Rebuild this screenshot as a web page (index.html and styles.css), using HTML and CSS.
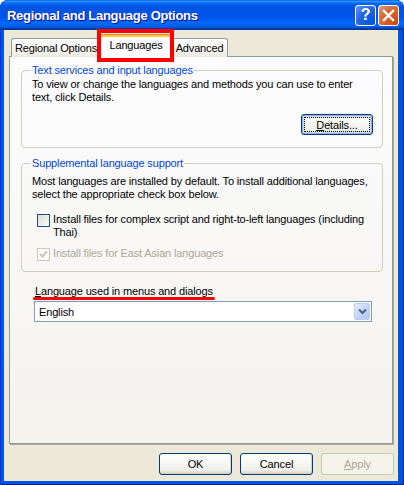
FILE: index.html
```html
<!DOCTYPE html>
<html lang="en">
<head>
    <meta charset="UTF-8">
    <title>Regional and Language Options</title>
    <link rel="stylesheet" href="styles.css">
</head>
<body>

    <div class="window">
        <div class="title-bar">
            <span class="title-text">Regional and Language Options</span>
            <div class="title-buttons">
                <div class="tb-btn tb-help">?</div>
                <div class="tb-btn tb-close">
                    <svg width="13" height="13" viewBox="0 0 13 13"><path d="M2 2 L11 11 M11 2 L2 11" stroke="#fff" stroke-width="2.4" stroke-linecap="square"/></svg>
                </div>
            </div>
        </div>

        <div class="client">
            <div class="tabs">
                <div class="tab tab-regional">Regional Options</div>
                <div class="tab tab-active">Languages</div>
                <div class="tab tab-advanced">Advanced</div>
            </div>

            <div class="panel">
                <fieldset class="group">
                    <legend>Text services and input languages</legend>
                    <p class="group-text">To view or change the languages and methods you can use to enter text, click Details.</p>
                    <div class="group-actions">
                        <button class="btn btn-default"><u>D</u>etails...</button>
                    </div>
                </fieldset>

                <fieldset class="group group-supp">
                    <legend>Supplemental language support</legend>
                    <p class="group-text supp-text">Most languages are installed by default. To install additional languages, select the appropriate check box below.</p>
                    <div class="check-row">
                        <span class="checkbox"></span>
                        <span class="check-label">Install files for complex script and right-to-left languages (including Thai)</span>
                    </div>
                    <div class="check-row check-row-disabled">
                        <span class="checkbox checkbox-disabled">
                            <svg width="11" height="11" viewBox="0 0 11 11"><path d="M2 5 L4.5 7.5 L9 2.5" fill="none" stroke="#c9c7ba" stroke-width="2"/></svg>
                        </span>
                        <span class="check-label">Install files for East Asian languages</span>
                    </div>
                </fieldset>

                <div class="menu-lang">
                    <div class="menu-lang-label"><u>L</u>anguage used in menus and dialogs</div>
                    <div class="select">
                        <span class="select-value">English</span>
                        <span class="select-arrow">
                            <svg width="9" height="7" viewBox="0 0 9 7"><path d="M1 1.5 L4.5 5 L8 1.5" fill="none" stroke="#4d6185" stroke-width="2"/></svg>
                        </span>
                    </div>
                </div>
            </div>

            <div class="dialog-buttons">
                <button class="btn">OK</button>
                <button class="btn">Cancel</button>
                <button class="btn btn-disabled"><u>A</u>pply</button>
            </div>
        </div>
    </div>

</body>
</html>
```

FILE: styles.css
```css
body {
    margin: 0;
    padding: 0;
    font-family: "Liberation Sans", Arial, sans-serif;
    font-size: 11px;
    letter-spacing: -0.15px;
    color: #000;
    background-color: #fff;
}

.window {
    width: 404px;
    height: 485px;
    box-sizing: border-box;
    display: flex;
    flex-direction: column;
    background-color: #0055e5;
    border-radius: 8px 8px 0 0;
    box-shadow: inset 1px 0 0 #0831d9, inset -1px 0 0 #001ea0, inset 0 -1px 0 #001ea0;
}

/* Синяя полоса заголовка */
.title-bar {
    height: 30px;
    flex-shrink: 0;
    display: flex;
    align-items: center;
    justify-content: space-between;
    padding: 0 5px 0 7px;
    border-radius: 8px 8px 0 0;
    background: linear-gradient(to bottom, #0058ee 0%, #3593ff 4%, #288eff 6%, #127dff 8%, #036ffc 10%, #0262ee 14%, #0057e5 20%, #0054e3 24%, #0055eb 56%, #005bf5 66%, #026afe 76%, #0062ef 86%, #0052d6 92%, #0040ab 94%, #003092 100%);
}

.title-text {
    color: #fff;
    font-weight: bold;
    font-size: 13px;
    letter-spacing: -0.3px;
    text-shadow: 1px 1px 0 #0f1089;
    margin-top: 1px;
}

.title-buttons {
    display: flex;
    gap: 2px;
}

.tb-btn {
    width: 19px;
    height: 19px;
    border: 1px solid #fff;
    border-radius: 3px;
    display: flex;
    align-items: center;
    justify-content: center;
    color: #fff;
    font-weight: bold;
    font-size: 16px;
}

.tb-help {
    background: radial-gradient(circle at 90% 90%, #0054e9 0%, #2263d5 55%, #4480ec 80%, #6a9ef5 100%);
}

.tb-close {
    background: radial-gradient(circle at 90% 90%, #cc4615 0%, #dc6527 55%, #cd7546 70%, #e7a580 100%);
}

.client {
    flex: 1;
    display: flex;
    flex-direction: column;
    margin: 0 6px 4px 4px;
    padding: 4px 4px 6px 5px;
    background-color: #ece9d8;
}

/* Вкладки */
.tabs {
    display: flex;
    align-items: flex-end;
    margin-left: 2px;
    margin-bottom: -1px;
    position: relative;
    z-index: 1;
}

.tab {
    height: 19px;
    box-sizing: border-box;
    display: flex;
    align-items: center;
    justify-content: center;
    border: 1px solid #919b9c;
    border-bottom: none;
    border-radius: 3px 3px 0 0;
    background: linear-gradient(to bottom, #fefefe, #f4f3ee 70%, #e9e8e1);
    white-space: nowrap;
}

.tab-regional {
    width: 89px;
    border-right: none;
}

.tab-advanced {
    width: 56px;
    border-left: none;
}

.tab-active {
    width: 72px;
    height: 23px;
    padding-bottom: 2px;
    background: #fcfcfe;
    border-top: 1px solid #e68b2c;
    box-shadow: inset 0 2px 0 #ffc83c;
    position: relative;
}

/* Красная рамка-пометка вокруг активной вкладки */
.tab-active::after {
    content: "";
    position: absolute;
    top: -6px;
    left: -4px;
    right: -3px;
    bottom: -5px;
    border: 4px solid #ff0000;
}

.panel {
    flex: 1;
    display: flex;
    flex-direction: column;
    margin-right: 1px;
    padding: 7px 9px 0 11px;
    border: 1px solid #919b9c;
    background: linear-gradient(to bottom, #fcfcfe, #f4f3ee);
    box-shadow: 1px 1px 0 #aca899;
}

.group {
    margin: 0;
    padding: 1px 10px 0 10px;
    border: 1px solid #d0d0bf;
    border-radius: 4px;
}

.group legend {
    color: #0046d5;
    padding: 0 1px;
    margin-left: -1px;
    line-height: 13px;
}

.group-text {
    margin: 0;
    line-height: 13px;
}

.group-actions {
    display: flex;
    justify-content: flex-end;
    margin: 10px -1px 12px 0;
}

.group-supp {
    margin-top: 9px;
    padding-bottom: 10px;
}

.supp-text {
    margin-top: 4px;
}

.check-row {
    display: flex;
    align-items: flex-start;
    line-height: 13px;
    margin-top: 12px;
    padding-left: 5px;
}

.check-row-disabled {
    margin-top: 8px;
    color: #aca899;
}

.checkbox {
    width: 13px;
    height: 13px;
    box-sizing: border-box;
    flex-shrink: 0;
    margin-top: 1px;
    margin-right: 3px;
    border: 1px solid #1c5180;
    background: linear-gradient(135deg, #dcdcd7, #fbfbfa);
    display: flex;
    align-items: center;
    justify-content: center;
}

.checkbox-disabled {
    border-color: #cac8bb;
    background: #fbfbf8;
}

.menu-lang {
    margin-top: 13px;
    padding-left: 13px;
}

.menu-lang-label {
    display: inline-block;
    line-height: 13px;
    margin-left: 1px;
    position: relative;
}

/* Красное подчёркивание-пометка */
.menu-lang-label::after {
    content: "";
    position: absolute;
    left: -2px;
    right: -2px;
    bottom: -2px;
    height: 3px;
    border-radius: 2px;
    background: #ff0000;
}

.select {
    width: 338px;
    height: 21px;
    box-sizing: border-box;
    margin-top: 3px;
    display: flex;
    align-items: center;
    justify-content: space-between;
    border: 1px solid #7f9db9;
    background: #fff;
    padding: 1px;
}

.select-value {
    padding-left: 3px;
}

.select-arrow {
    width: 16px;
    height: 17px;
    box-sizing: border-box;
    display: flex;
    align-items: center;
    justify-content: center;
    border-radius: 2px;
    border: 1px solid #b9cdf5;
    background: linear-gradient(135deg, #e6eefc, #c1d3fb 60%, #b4c8f6);
}

/* Кнопки в стиле XP */
.btn {
    width: 73px;
    height: 22px;
    padding: 0;
    font-family: "Liberation Sans", Arial, sans-serif;
    font-size: 11px;
    letter-spacing: -0.15px;
    color: #000;
    border: 1px solid #003c74;
    border-radius: 3px;
    background: linear-gradient(to bottom, #ffffff, #f0f0ea 80%, #d6d0c5);
    box-shadow: inset -1px -1px 0 #d6d0c5;
}

.btn-default {
    width: 72px;
    height: 21px;
    box-shadow: inset 0 0 0 1px #96aff0, inset 0 0 0 2px #cedaf7;
    outline: 1px dotted #000;
    outline-offset: -4px;
}

.btn-disabled {
    color: #aca899;
    border-color: #c9c7ba;
    background: #f5f4ea;
    box-shadow: none;
}

.dialog-buttons {
    display: flex;
    justify-content: flex-end;
    gap: 8px;
    margin-top: 9px;
}
```
